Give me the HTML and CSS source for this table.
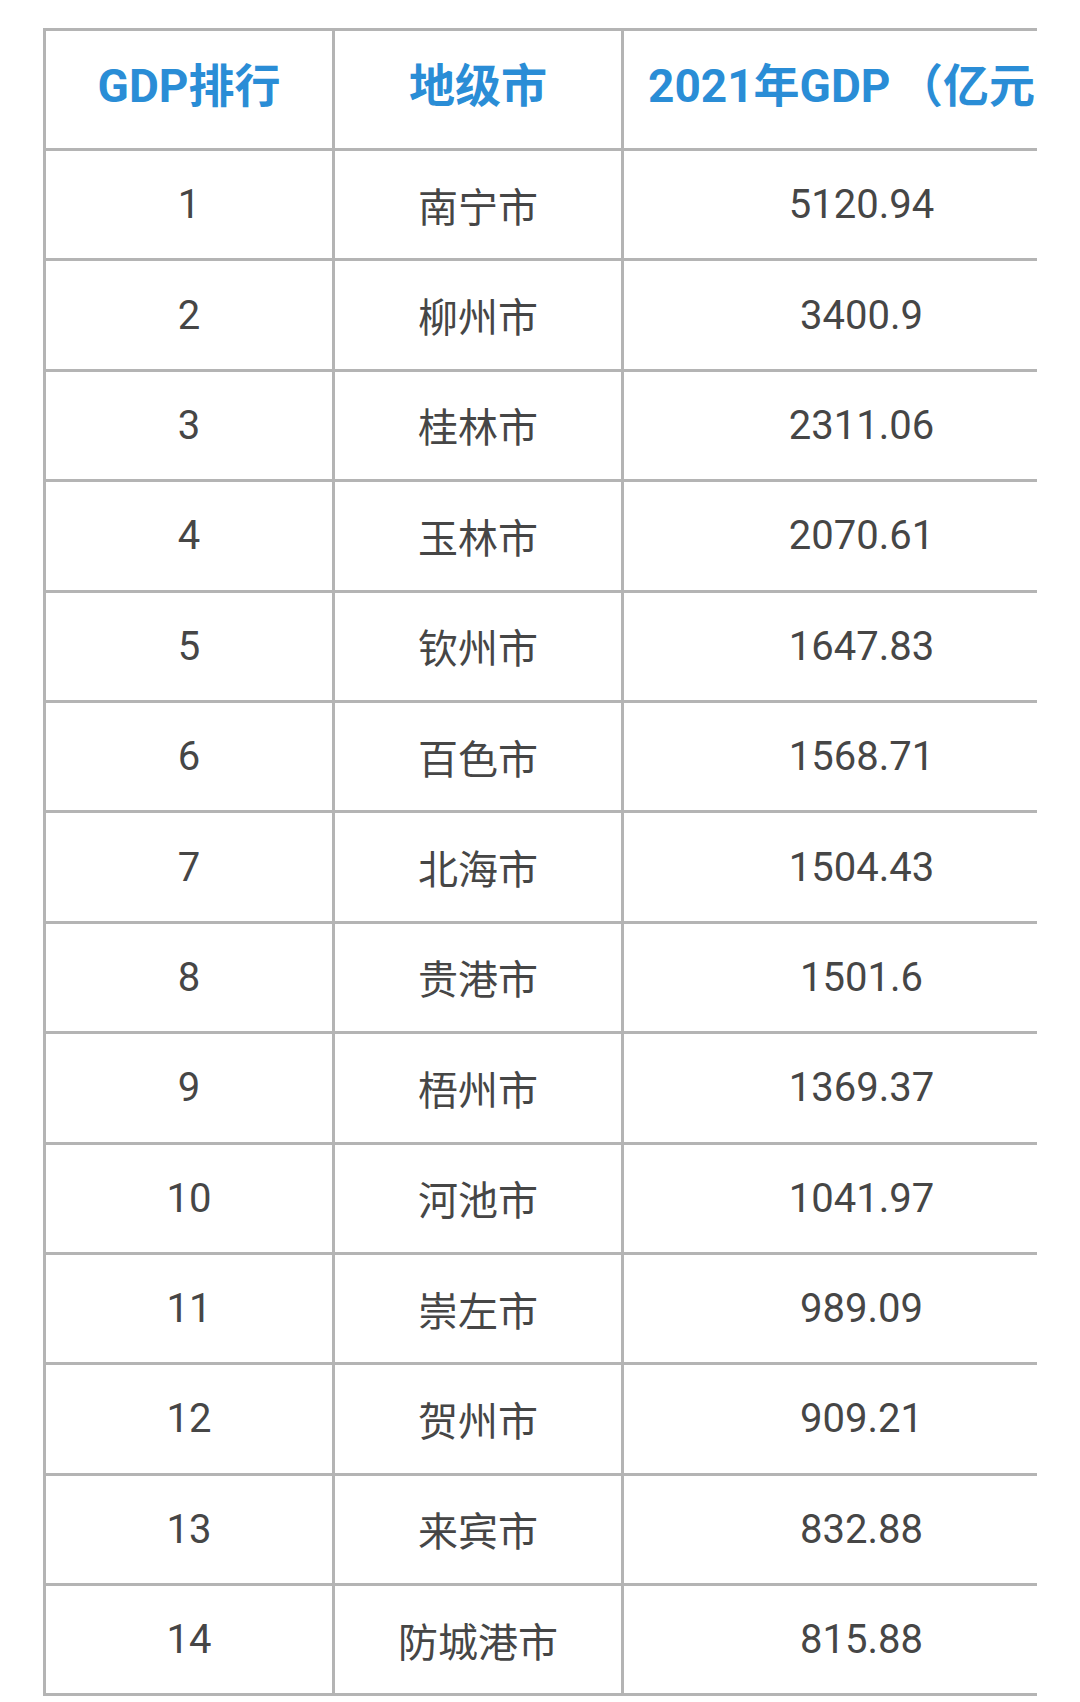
FILE: index.html
```html
<!DOCTYPE html>
<html lang="zh-CN">
<head>
<meta charset="utf-8">
<title>广西地级市2021年GDP排行</title>
<link rel="stylesheet" href="styles.css">
</head>
<body>
<div class="frame">
  <table class="gdp">
    <colgroup>
      <col class="c-rank">
      <col class="c-city">
      <col class="c-gdp">
    </colgroup>
    <thead>
      <tr><th>GDP排行</th><th>地级市</th><th class="h-gdp">2021年GDP （亿元）</th></tr>
    </thead>
    <tbody>
      <tr><td>1</td><td>南宁市</td><td>5120.94</td></tr>
      <tr><td>2</td><td>柳州市</td><td>3400.9</td></tr>
      <tr><td>3</td><td>桂林市</td><td>2311.06</td></tr>
      <tr><td>4</td><td>玉林市</td><td>2070.61</td></tr>
      <tr><td>5</td><td>钦州市</td><td>1647.83</td></tr>
      <tr><td>6</td><td>百色市</td><td>1568.71</td></tr>
      <tr><td>7</td><td>北海市</td><td>1504.43</td></tr>
      <tr><td>8</td><td>贵港市</td><td>1501.6</td></tr>
      <tr><td>9</td><td>梧州市</td><td>1369.37</td></tr>
      <tr><td>10</td><td>河池市</td><td>1041.97</td></tr>
      <tr><td>11</td><td>崇左市</td><td>989.09</td></tr>
      <tr><td>12</td><td>贺州市</td><td>909.21</td></tr>
      <tr><td>13</td><td>来宾市</td><td>832.88</td></tr>
      <tr><td>14</td><td>防城港市</td><td>815.88</td></tr>
    </tbody>
  </table>
</div>
</body>
</html>
```
FILE: styles.css
```css
html, body {
  margin: 0;
  padding: 0;
  background: #ffffff;
}

body {
  font-family: Roboto, "Noto Sans CJK SC", "Noto Sans", sans-serif;
}

.frame {
  margin-left: 43px;
  padding-top: 28px;
  width: 994px;
  overflow: hidden;
}

.gdp {
  border-collapse: collapse;
  table-layout: fixed;
  width: 1056px;
}

.c-rank { width: 289px; }
.c-city { width: 289px; }
.c-gdp { width: 478px; }

.gdp th,
.gdp td {
  border: 3px solid #b4b4b4;
  text-align: center;
  vertical-align: middle;
  padding: 0;
  white-space: nowrap;
}

.gdp thead tr {
  height: 120px;
}

.gdp th {
  color: #2a8dd6;
  font-weight: 700;
  font-size: 46px;
  padding-bottom: 16px;
}

.gdp th.h-gdp {
  word-spacing: -5px;
  padding-left: 6px;
}

.gdp tbody tr {
  height: 110.4px;
}

.gdp td {
  color: #464646;
  font-size: 40px;
  font-weight: 400;
}
```
